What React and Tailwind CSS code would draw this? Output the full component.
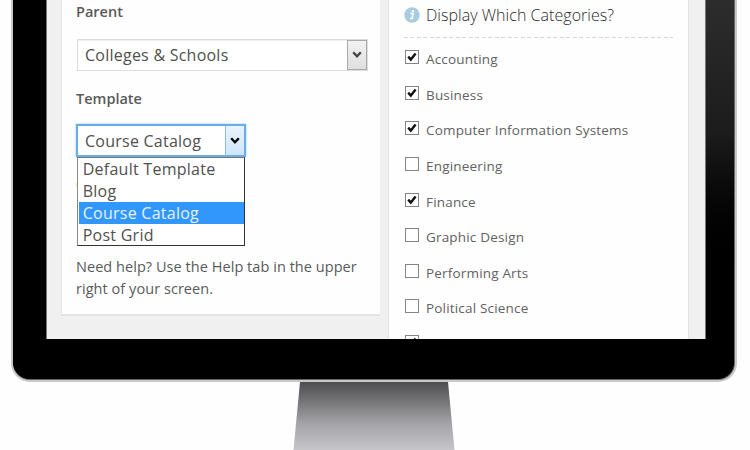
import React from 'react';

const categories = [
  ['Accounting', true],
  ['Business', true],
  ['Computer Information Systems', true],
  ['Engineering', false],
  ['Finance', true],
  ['Graphic Design', false],
  ['Performing Arts', false],
  ['Political Science', false],
  ['', true],
];

const templates = ['Default Template', 'Blog', 'Course Catalog', 'Post Grid'];

function Chevron({ className }) {
  return (
    <svg viewBox="0 0 10 8" className={`h-2 w-2.5 ${className}`} fill="none" stroke="currentColor" strokeWidth="2.3">
      <path d="M1.2 1.3 L5 5.4 L8.8 1.3" />
    </svg>
  );
}

function Checkbox({ checked }) {
  return (
    <span className="flex h-[14px] w-[14px] shrink-0 items-center justify-center border border-[#858585] bg-white">
      {checked && (
        <svg viewBox="0 0 12 12" className="h-3 w-3 shrink-0" fill="none" stroke="#111" strokeWidth="2.4">
          <path d="M2.2 5.6 L4.8 8.6 L9.6 2.6" />
        </svg>
      )}
    </span>
  );
}

function AttributesPanel() {
  return (
    <section className="h-[316px] w-[319px] shrink-0 border-b-2 border-l border-[#e4e4e4] bg-[#fefefe] pl-[14px]">
      <div className="pt-[2px] text-[14.5px] leading-5 font-semibold text-[#5a5a5a]">Parent</div>
      <div className="mt-[17px] ml-px flex h-8 w-[291px] justify-between border border-[#dddddd] bg-white pl-[7px] shadow-[inset_0_1px_1px_#eeeeee]">
        <span className="text-[16px] leading-[30px] tracking-[0.24px]">Colleges &amp; Schools</span>
        <span className="flex w-5 items-center justify-center border border-[#aaaaaa] bg-linear-to-b from-[#f2f2f2] to-[#dfdfdf]">
          <Chevron className="text-[#444444]" />
        </span>
      </div>
      <div className="mt-[18px] text-[14.5px] leading-5 font-semibold text-[#5a5a5a]">Template</div>
      <div className="relative mt-[15px] w-[170px]">
        <div className="flex h-[33px] justify-between border-2 border-[#69aee7] bg-white pl-[7px] shadow-[0_0_2px_#8fc6f0]">
          <span className="text-[16px] leading-[31px] tracking-[0.24px]">Course Catalog</span>
          <span className="flex w-[19px] items-center justify-center border-l border-[#8bbde8] bg-linear-to-b from-[#eaf4fd] to-[#cfe5fa]">
            <Chevron className="text-black" />
          </span>
        </div>
        <div className="absolute top-[33px] left-px h-[89px] w-[168px] border border-[#333333] border-t-[#777777] border-l-[#888888] bg-white">
          {templates.map((name) => (
            <div
              key={name}
              className={`ml-px h-[22px] pl-[3.7px] text-[16px] leading-[22px] tracking-[0.26px] ${name === 'Course Catalog' ? 'bg-[#3297fd] text-[#e5f2ff]' : ''}`}
            >
              {name}
            </div>
          ))}
        </div>
        <span className="absolute top-[59px] left-0 h-[3px] w-px bg-[#fbe3ae]" />
      </div>
      <p className="mt-[99px] text-[14.5px] leading-[21.5px] tracking-[0.05px] text-[#5a5a5a]">
        Need help? Use the Help tab in the upper<br />right of your screen.
      </p>
    </section>
  );
}

function CategoriesPanel() {
  return (
    <section className="h-[345px] w-[301px] shrink-0 border-x border-[#e3e3e3] bg-[#fefefe] pl-[15px]">
      <div className="flex h-[37px] items-center pb-[7px] text-[16px]">
        <svg viewBox="0 0 16 16" className="h-4 w-4 shrink-0">
          <circle cx="8" cy="8" r="7.7" fill="#a9cbdf" />
          <circle cx="8.9" cy="4.1" r="1.2" fill="#ffffff" />
          <path d="M6.3 6.6 H9.1 L8 11.5 H9.3 M6 11.5 H8" fill="none" stroke="#ffffff" strokeWidth="1.5" />
        </svg>
        <h2 className="ml-[6px] leading-6 font-light tracking-[0.04px] text-[#2b2b2b]">Display Which Categories?</h2>
      </div>
      <div className="h-px w-[269px] bg-[repeating-linear-gradient(90deg,#d6d6d6_0_4px,transparent_4px_6.5px)]" />
      <ul className="pt-3">
        {categories.map(([name, checked], i) => (
          <li key={i} className="flex h-[35.65px] items-start gap-[7px] pl-px">
            <Checkbox checked={checked} />
            <span className="text-[13.5px] leading-[19px] tracking-[0.18px] text-[#626262]">{name}</span>
          </li>
        ))}
      </ul>
    </section>
  );
}

export default function App() {
  return (
    <div className="h-[450px] w-[750px] overflow-hidden bg-[#fefefe] font-['Open_Sans','Noto_Sans',sans-serif] whitespace-nowrap text-[#505050]">
      <div className="ml-[11px] h-[382px] w-[726px] rounded-b-[19px] bg-[#c9c9c9] px-[2px] pb-[2px]">
        <div className="h-full rounded-b-[17px] border-r border-b border-[#666666] bg-linear-to-b from-[#2d2d2d] via-[#1c1c1c] via-35% to-black to-75%">
          <div className="h-full rounded-b-[17px] bg-linear-to-r from-black from-50% to-transparent to-50% pl-[33px]">
            <div className="flex h-[339px] w-[660px] gap-2 overflow-hidden border-x border-[#777777] bg-[#f0f0f0] pl-[14px]">
              <AttributesPanel />
              <CategoriesPanel />
            </div>
          </div>
        </div>
      </div>
      <svg viewBox="0 0 162 68" className="ml-[293px] h-[68px] w-[162px]">
        <defs>
          <linearGradient id="stand" x1="0" y1="0" x2="0" y2="1">
            <stop offset="0" stopColor="#4e4e50" />
            <stop offset="0.2" stopColor="#69696b" />
            <stop offset="0.6" stopColor="#a3a3a7" />
            <stop offset="1" stopColor="#c6c6ca" />
          </linearGradient>
        </defs>
        <path d="M7 0 H155 L161.5 68 H0.5 Z" fill="url(#stand)" />
      </svg>
    </div>
  );
}
